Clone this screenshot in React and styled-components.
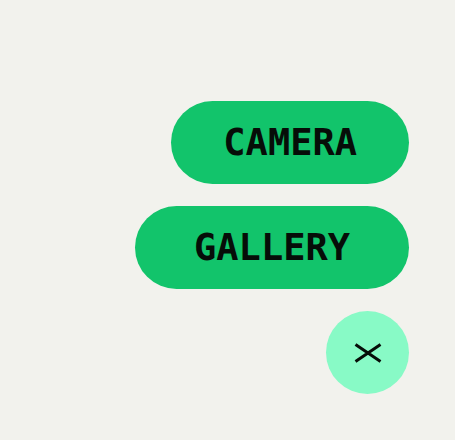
import React from 'react'
import styled, { createGlobalStyle } from 'styled-components'

const GlobalStyle = createGlobalStyle`
  html, body {
    margin: 0;
    padding: 0;
    background: #f2f2ed;
  }
`

const Screen = styled.div`
  width: 455px;
  height: 440px;
  box-sizing: border-box;
  padding: 0 46px 46px 0;
  display: flex;
  flex-direction: column;
  justify-content: flex-end;
  align-items: flex-end;
  gap: 22px;
`

const ActionButton = styled.button`
  height: 83px;
  padding: 0 ${p => p.$pad}px;
  border: none;
  border-radius: 42px;
  background: #12c46b;
  color: #060d08;
  font-family: 'DejaVu Sans Mono', 'Liberation Mono', monospace;
  font-weight: 700;
  font-size: 37px;
  line-height: 1;
  display: flex;
  align-items: center;
  justify-content: center;
  cursor: pointer;
`

const CloseFab = styled.button`
  width: 83px;
  height: 83px;
  border: none;
  border-radius: 50%;
  background: #88fac6;
  display: flex;
  align-items: center;
  justify-content: center;
  padding: 0;
  cursor: pointer;
`

function CrossIcon () {
  return (
    <svg width='28' height='20' viewBox='0 0 28 20' fill='none'>
      <path
        d='M1.5 1.5 L26.5 18.5 M26.5 1.5 L1.5 18.5'
        stroke='#060d08'
        strokeWidth='3'
      />
    </svg>
  )
}

export default function App () {
  return (
    <>
      <GlobalStyle />
      <Screen>
        <ActionButton $pad={52}>CAMERA</ActionButton>
        <ActionButton $pad={59}>GALLERY</ActionButton>
        <CloseFab aria-label='close'>
          <CrossIcon />
        </CloseFab>
      </Screen>
    </>
  )
}
